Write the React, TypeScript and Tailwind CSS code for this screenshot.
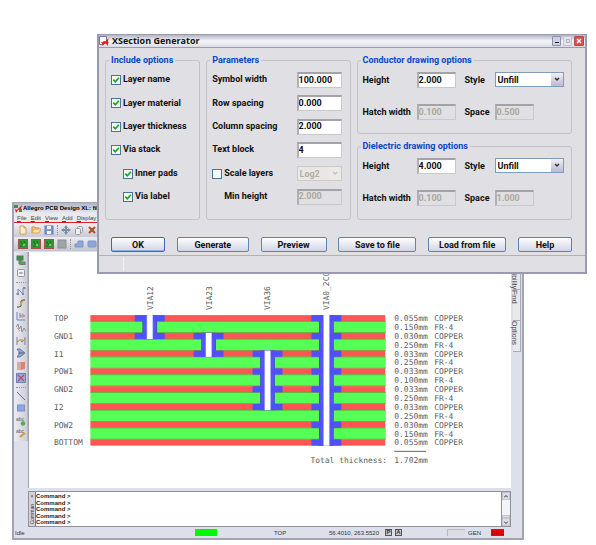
import React from 'react';

interface Layer {
  name?: string;
  thickness: string;
  material: 'COPPER' | 'FR-4';
}

interface Via {
  label: string;
  x: number;
  from: number;
  to: number;
}

const layers: Layer[] = [
  { name: 'TOP', thickness: '0.055mm', material: 'COPPER' },
  { thickness: '0.150mm', material: 'FR-4' },
  { name: 'GND1', thickness: '0.030mm', material: 'COPPER' },
  { thickness: '0.250mm', material: 'FR-4' },
  { name: 'I1', thickness: '0.033mm', material: 'COPPER' },
  { thickness: '0.250mm', material: 'FR-4' },
  { name: 'POW1', thickness: '0.033mm', material: 'COPPER' },
  { thickness: '0.100mm', material: 'FR-4' },
  { name: 'GND2', thickness: '0.033mm', material: 'COPPER' },
  { thickness: '0.250mm', material: 'FR-4' },
  { name: 'I2', thickness: '0.033mm', material: 'COPPER' },
  { thickness: '0.250mm', material: 'FR-4' },
  { name: 'POW2', thickness: '0.030mm', material: 'COPPER' },
  { thickness: '0.150mm', material: 'FR-4' },
  { name: 'BOTTOM', thickness: '0.055mm', material: 'COPPER' },
];

// from / to are copper numbers, counted from the top
const vias: Via[] = [
  { label: 'VIA12', x: 121, from: 0, to: 1 },
  { label: 'VIA23', x: 180, from: 1, to: 2 },
  { label: 'VIA36', x: 239, from: 2, to: 5 },
  { label: 'VIA0_2CO', x: 298, from: 0, to: 7 },
];

const TOP_Y = 63;
const PITCH = 17.8;
const copperY = (n: number) => TOP_Y + n * PITCH;

const CrossSection: React.FC = () => (
  <svg
    width="483"
    height="236"
    viewBox="0 0 483 236"
    className="block max-w-full"
    fontFamily="'DejaVu Sans Mono', monospace"
    fontSize="8"
    fill="#5c5c5c"
    role="img"
    aria-label="Layer cross section"
  >
    {layers.map((layer, i) =>
      layer.material === 'COPPER' ? (
        <rect key={i} x="61.5" y={copperY(i / 2)} width="295.5" height="6.2" fill="#ff5555" />
      ) : (
        <g key={i}>
          <rect x="61.5" y={copperY((i - 1) / 2) + 6} width="296" height="12" fill="#55ff55" />
          <path
            d={`M61.5 ${copperY((i - 1) / 2) + 6.3}h296M61.5 ${copperY((i - 1) / 2) + 17.6}h296`}
            stroke="#5a8a20"
            strokeWidth="0.6"
          />
        </g>
      ),
    )}

    {vias.map((via) => {
      const top = copperY(via.from);
      const bottom = copperY(via.to) + 6.2;
      const coppers = Array.from({ length: via.to - via.from + 1 }, (_, n) => via.from + n);
      return (
        <g key={via.label}>
          <rect x={via.x - 7.4} y={top} width="14.8" height={bottom - top} fill="#3c55b8" />
          <rect x={via.x - 6.6} y={top} width="13.2" height={bottom - top} fill="#5555ff" />
          {coppers.map((n) => (
            <rect key={n} x={via.x - 15} y={copperY(n)} width="30" height="6.2" fill="#5050fa" />
          ))}
          <rect x={via.x - 3.4} y={top} width="6.8" height={bottom - top} fill="#8f8ff8" />
          <rect x={via.x - 2.6} y={top} width="5.4" height={bottom - top} fill="#ffffff" />
          <text transform={`translate(${via.x + 3} 58) rotate(-90)`}>{via.label}</text>
        </g>
      );
    })}

    {layers.map((layer, i) => {
      const y = TOP_Y + 6 + (i * PITCH) / 2;
      return (
        <g key={i}>
          {layer.name && <text x="25" y={y}>{layer.name}</text>}
          <text x="366" y={y}>{layer.thickness}</text>
          <text x="406" y={y}>{layer.material}</text>
        </g>
      );
    })}

    <path d="M366 199.5h32" stroke="#666" strokeWidth="1" />
    <text x="282" y="211">Total thickness:</text>
    <text x="366" y="211">1.702mm</text>
  </svg>
);

const Icon: React.FC<{ children: React.ReactNode }> = ({ children }) => (
  <svg width="10" height="10" viewBox="0 0 10 10" fill="none" className="block shrink-0">
    {children}
  </svg>
);

const ToolButton: React.FC<{ label: string; children: React.ReactNode }> = ({ label, children }) => (
  <button type="button" aria-label={label} className="block shrink-0">
    <Icon>{children}</Icon>
  </button>
);

const AppLogo = () => (
  <svg width="10" height="10" viewBox="0 0 10 10" className="block shrink-0">
    <path d="M.5 .5h7v5l-3 3h-4z" fill="#fff" stroke="#6d7ba0" strokeWidth="1" />
    <path d="M1 5l2 1.500L5 5l1.500 .5L9.500 2l-.5 3.500 .5 1L8.500 10 7 7.500 5 8l-1.500 2-.5-2.500z" fill="#e01c1c" />
  </svg>
);

const EditorLogo = () => (
  <svg width="9" height="9" viewBox="0 0 9 9" className="block shrink-0">
    <path d="M0 1h4v3H0zM5 5h3v3H5z" fill="#2e9a3c" />
    <path d="M1 5l2 1 2-2 3-3-1 4-3 1-2 3z" fill="#e01c1c" />
  </svg>
);

const Grip = () => <span className="h-[10px] border-l border-dotted border-[#8e909c]" />;

const BoardIcon: React.FC<{ label: string }> = ({ label }) => (
  <ToolButton label={label}>
    <rect x=".5" y=".5" width="9" height="9" fill="#2f9a35" stroke="#a65046" />
    <path d="M3 2v2l4 3M6 2l1 2M2 7h2" stroke="#126a1e" />
    <circle cx="6" cy="6" r="1" fill="#8cdc8c" />
  </ToolButton>
);

const Toolbars = () => (
  <div className="bg-[#dedfe6]">
    <div className="flex h-[14px] items-center gap-[3px] bg-linear-to-b from-[#f1f1f5] to-[#c9cad3] px-[4px]">
      <ToolButton label="New">
        <path d="M2 1h4l2 2v6H2z" fill="#fff1cf" stroke="#d79a4c" />
        <path d="M6 1v2h2" stroke="#d79a4c" />
      </ToolButton>
      <ToolButton label="Open">
        <path d="M1 8V2h3l1 1h3v2" fill="#f8d48a" stroke="#c98d3d" />
        <path d="M1 8l2-4h7L8 8z" fill="#ffe3a6" stroke="#d9a45c" />
      </ToolButton>
      <ToolButton label="Save">
        <rect x="1" y="1" width="8" height="8" fill="#7f98d4" stroke="#6478b0" />
        <path d="M3 1h4v3H3zM3 6h4v3H3z" fill="#eef3ff" />
      </ToolButton>
      <Grip />
      <ToolButton label="Move">
        <path d="M5 1v8M1 5h8" stroke="#7e8da6" strokeWidth="2" />
        <path d="M3 3l2-3 2 3zM3 7l2 3 2-3zM3 3L0 5l3 2zM7 3l3 2-3 2z" fill="#7e8da6" />
      </ToolButton>
      <ToolButton label="Copy">
        <rect x="3.5" y="1.5" width="5" height="6" rx="1" fill="#eee" stroke="#999" />
        <rect x="1.5" y="3.5" width="5" height="6" rx="1" fill="#eee" stroke="#999" />
      </ToolButton>
      <ToolButton label="Delete">
        <path d="M2 2l6 6M8 2L2 8" stroke="#b5491f" strokeWidth="2" />
      </ToolButton>
    </div>
    <div className="flex h-[14px] items-center gap-[3px] bg-linear-to-b from-[#ececf1] to-[#c4c5ce] px-[4px]">
      <BoardIcon label="Place" />
      <BoardIcon label="Route" />
      <BoardIcon label="Etch" />
      <ToolButton label="Off">
        <rect x="1" y="1" width="8" height="8" fill="#a2a3a8" stroke="#8e8f94" />
      </ToolButton>
      <Grip />
      <ToolButton label="Shape">
        <path d="M4 2h5v6H1V5h3z" fill="#8ea6dc" stroke="#7f94c8" />
      </ToolButton>
      <ToolButton label="Rectangle">
        <rect x="1" y="2" width="8" height="6" rx="1" fill="#8ea6dc" stroke="#7f94c8" />
      </ToolButton>
    </div>
  </div>
);

const SideTools = () => (
  <div className="w-[14px] shrink-0">
    <div className="flex h-[189px] flex-col items-center justify-between border-r border-[#b5b6c0] bg-linear-to-r from-[#ededf2] to-[#cdced7] py-[3px]">
      <div className="flex flex-col gap-[3px]">
        <ToolButton label="Place manual">
          <rect x="1" y="1" width="6" height="4" fill="#2f9a45" stroke="#56705a" />
          <path d="M3 9V5h2v2h4v3z" fill="#46b545" stroke="#66756a" />
        </ToolButton>
        <ToolButton label="Text box">
          <rect x="1.5" y="1.5" width="7" height="7" rx="1" fill="#f3f3f6" stroke="#92949d" />
          <path d="M3 5h4" stroke="#777" />
        </ToolButton>
      </div>
      <span className="w-[10px] border-t border-dotted border-[#8e909c]" />
      <div className="flex h-[97px] flex-col justify-between">
        <ToolButton label="Add connect">
          <path d="M0 8h2V3l5 5V2h3" stroke="#7c8bb4" />
          <path d="M1 7h2v2H1zM6 7h2v2H6zM7 1h2v2H7z" fill="#7c8bb4" />
        </ToolButton>
        <ToolButton label="Slide">
          <path d="M1 9h2l2-1V3l2-1h2" stroke="#44454c" />
          <path d="M4 7l3-4" stroke="#d7b03d" strokeWidth="1.500" />
        </ToolButton>
        <ToolButton label="Delay tune">
          <path d="M1 1v8h8M4 2v5M4 5h5" stroke="#6f85b8" />
          <path d="M6 2l3 3-3 2z" fill="#d98a8a" />
        </ToolButton>
        <ToolButton label="Custom smooth">
          <path d="M0 4l2-3 1 5 2-3 1 6 2-4 2 3" stroke="#8c8c94" />
          <path d="M1 5l3 3" stroke="#c99" />
        </ToolButton>
        <ToolButton label="Vertex">
          <path d="M1 1v8M9 1v8M1 6l3-2 2 2 3-3" stroke="#85858d" />
          <path d="M3 3h4v2H3z" fill="#d9b35a" />
        </ToolButton>
        <ToolButton label="Spread">
          <path d="M1 1h3l5 4-5 4H1l3-4z" fill="#8fa6d6" stroke="#647bb0" />
          <path d="M2 5h6" stroke="#5a6480" />
        </ToolButton>
        <ToolButton label="Glossing">
          <path d="M1 2h8M1 4h8M1 6h8M1 8h6" stroke="#cd7360" />
          <path d="M5 1h4v7H5z" fill="#d98370" />
        </ToolButton>
        <ToolButton label="Ratsnest">
          <rect x=".5" y=".5" width="9" height="9" fill="#9aacdb" stroke="#6d80b5" />
          <path d="M2 2l6 6M8 2L2 8" stroke="#c0465a" strokeWidth="1.300" />
        </ToolButton>
      </div>
      <span className="w-[10px] border-t border-dotted border-[#8e909c]" />
      <div className="flex h-[47px] flex-col justify-between">
        <ToolButton label="Add line">
          <path d="M1 1l8 8" stroke="#5f6f94" />
        </ToolButton>
        <ToolButton label="Add rectangle">
          <rect x="1.500" y="2" width="7" height="6" fill="#8fa6dc" stroke="#7b92c8" />
        </ToolButton>
        <ToolButton label="Add text">
          <text x="0" y="5" fontSize="5" fontFamily="'Liberation Sans', sans-serif" fill="#555">abc</text>
          <circle cx="7" cy="7.500" r="2.200" fill="#4db04a" />
        </ToolButton>
        <ToolButton label="Edit text">
          <text x="0" y="5" fontSize="5" fontFamily="'Liberation Sans', sans-serif" fill="#555">abc</text>
          <path d="M4 9l5-4" stroke="#dc9a28" strokeWidth="2" />
        </ToolButton>
      </div>
    </div>
  </div>
);

const DockTabs = () => (
  <div className="w-[11px] shrink-0 pl-[2px] text-[7px] leading-[8px] text-[#44454c]">
    {['Visibility', 'Find', 'Options'].map((tab) => (
      <button
        key={tab}
        type="button"
        className="block h-[31px] w-[8px] border-r border-b border-[#a9aab4] bg-[#e9e9ed] py-[2px] text-left [writing-mode:vertical-rl] first:h-[38px] first:text-right"
      >
        {tab}
      </button>
    ))}
  </div>
);

const ScrollArrow: React.FC<{ up?: boolean }> = ({ up }) => (
  <button
    type="button"
    aria-label={up ? 'Scroll up' : 'Scroll down'}
    className="flex h-[8px] w-full items-center justify-center border border-[#c3c4d0] bg-[#dcdde8]"
  >
    <svg width="4" height="3" viewBox="0 0 4 3" fill="none">
      <path d={up ? 'M0 2.500l2-2 2 2' : 'M0 .5l2 2 2-2'} stroke="#333" />
    </svg>
  </button>
);

const CommandPane = () => (
  <div className="mr-[11px] ml-[14px] flex h-[36px] border border-[#8f909a] bg-[#dedfe6]">
    <div className="flex w-[6px] flex-col items-center justify-between overflow-hidden bg-[#d3d3da] py-[2px] text-[5px] leading-[5px] text-[#333]">
      <span>×</span>
      <span className="[writing-mode:vertical-rl] rotate-180">Comman</span>
    </div>
    <div className="flex flex-1 flex-col justify-between border-l border-[#77787f] bg-white py-px text-[6px] leading-[6px] font-bold text-[#222]">
      {[1, 2, 3, 4, 5].map((n) => (
        <p key={n}>Command &gt;</p>
      ))}
    </div>
    <div className="flex w-[9px] flex-col border-l border-[#8f909a] bg-[#f4f4f8]">
      <ScrollArrow up />
      <span className="mt-auto h-[3px] border border-[#c3c4d0] bg-[#dcdde8]" />
      <ScrollArrow />
    </div>
  </div>
);

const StatusBar = () => (
  <div className="flex h-[11px] items-center pl-px text-[6px] leading-[8px] text-[#333]">
    <span className="w-[180px]">Idle</span>
    <span className="h-[7px] w-[22px] bg-[#00f800]" />
    <span className="ml-[57px] w-[55px]">TOP</span>
    <span className="w-[56px]">56.4010, 263.5520</span>
    <span className="flex gap-[3px] font-bold">
      <button type="button" className="h-[7px] w-[7px] border border-[#555] bg-[#c9c9cf] text-center leading-[5px]">P</button>
      <button type="button" className="h-[7px] w-[7px] border border-[#555] bg-[#c9c9cf] text-center leading-[5px]">A</button>
    </span>
    <span className="ml-auto h-[7px] w-[18px] border-t border-l border-[#b9b9c0] bg-[#dcdce0]" />
    <span className="ml-[3px] w-[23px]">GEN</span>
    <span className="mr-[18px] h-[7px] w-[13px] bg-[#ff0000] text-center text-[#8a0000]">DRC</span>
  </div>
);

const EditorWindow = () => (
  <section className="mt-[202px] mr-[72px] ml-[12px] border-2 border-t border-[#a2a3b6] bg-[#dde0ea] font-['Liberation_Sans',sans-serif]">
    <header className="flex h-[10px] items-center overflow-hidden bg-linear-to-b from-[#b4b5c6] to-[#e8e8f0] text-[6px] font-bold whitespace-nowrap">
      <EditorLogo />
      <h1>Allegro PCB Design XL: file.brd</h1>
    </header>
    <nav className="flex h-[10px] items-center gap-[4px] border-b border-[#e02020] bg-[#e9e9ee] pl-[3px] text-[6px] text-[#44454c]">
      {['File', 'Edit', 'View', 'Add', 'Display'].map((item) => (
        <button key={item} type="button" className="leading-[8px] first-letter:underline">
          {item}
        </button>
      ))}
    </nav>
    <Toolbars />
    <div className="mt-px flex">
      <SideTools />
      <div className="min-w-0 flex-1 overflow-hidden border-l border-[#a3a4ad] bg-white">
        <CrossSection />
      </div>
      <DockTabs />
    </div>
    <div className="h-[3px]" />
    <CommandPane />
    <StatusBar />
  </section>
);

interface FieldProps {
  label: string;
  value: string;
  disabled?: boolean;
}

const inputClass =
  'h-[16px] border-t-2 border-l-2 border-r border-b border-t-[#a3a3a6] border-l-[#b0b0b3] border-r-[#c9c8cd] border-b-[#c9c8cd] bg-white pb-[2px] font-bold leading-[11px] disabled:bg-[#e0dfe3] disabled:text-[#aaa89c]';

const Check: React.FC<{ label: string; checked?: boolean; className?: string }> = ({ label, checked, className = '' }) => (
  <label className={`flex h-[16px] items-center gap-[2px] ${className}`}>
    <span className="grid">
      <input
        type="checkbox"
        defaultChecked={checked}
        className="peer col-start-1 row-start-1 h-[10px] w-[10px] appearance-none border border-[#4a7398] bg-[#f6f6f4]"
      />
      <svg
        width="10"
        height="10"
        viewBox="0 0 10 10"
        fill="none"
        className="pointer-events-none invisible col-start-1 row-start-1 peer-checked:visible"
      >
        <path d="M2.300 4.600l2 2.200 3.600-4" stroke="#21a121" strokeWidth="1.700" />
      </svg>
    </span>
    {label}
  </label>
);

const ParamField: React.FC<FieldProps & { indent?: boolean }> = ({ label, value, disabled, indent }) => (
  <label className="flex h-[16px] items-center justify-between">
    <span className={indent ? 'pl-[12px]' : ''}>{label}</span>
    <input defaultValue={value} disabled={disabled} className={`w-[45px] ${inputClass}`} />
  </label>
);

const DropDown: React.FC<{ label: string; options: string[]; disabled?: boolean; className: string }> = ({
  label,
  options,
  disabled,
  className,
}) => (
  <span className={`grid ${className}`}>
    <select
      aria-label={label}
      disabled={disabled}
      className="col-start-1 row-start-1 h-[15px] w-full appearance-none border border-[#7f9db9] bg-white px-[2px] leading-[12px] font-bold disabled:border-[#cbc9c4] disabled:bg-[#e8e7e5] disabled:text-[#b0aea2]"
    >
      {options.map((o) => (
        <option key={o}>{o}</option>
      ))}
    </select>
    <span
      className={`pointer-events-none col-start-1 row-start-1 m-px flex h-[13px] w-[12px] items-center justify-center justify-self-end ${
        disabled ? 'bg-[#ebeae8] text-[#c4c2ba]' : 'bg-linear-to-b from-[#f0f0f6] to-[#b9bbcf] text-[#333]'
      }`}
    >
      <svg width="6" height="5" viewBox="0 0 6 5" fill="none">
        <path d="M1 1l2 2 2-2" stroke="currentColor" strokeWidth="1.500" />
      </svg>
    </span>
  </span>
);

const Group: React.FC<{ title: string; className?: string; children: React.ReactNode }> = ({ title, className = '', children }) => (
  <fieldset className={`min-w-0 rounded-[3px] border border-[#c3c2c9] ${className}`}>
    <legend className="ml-[3px] px-[2px] leading-[12px] text-[#0a46c8]">{title}</legend>
    {children}
  </fieldset>
);

const DrawingOptions: React.FC<{ title: string; height: string; hatch: string; space: string }> = ({ title, height, hatch, space }) => (
  <Group title={title}>
    <div className="grid grid-cols-[54px_39px_30px_1fr] gap-y-[16px] pt-[6px] pr-[7px] pb-[13px] pl-[5px]">
      <label htmlFor={`${title}-height`} className="leading-[16px]">Height</label>
      <input id={`${title}-height`} defaultValue={height} className={inputClass} />
      <span className="pl-[9px] leading-[16px]">Style</span>
      <DropDown label={`${title} style`} options={['Unfill', 'Fill', 'Hatch']} className="ml-[9px]" />
      <label htmlFor={`${title}-hatch`} className="leading-[16px]">Hatch width</label>
      <input id={`${title}-hatch`} defaultValue={hatch} disabled className={inputClass} />
      <label htmlFor={`${title}-space`} className="pl-[9px] leading-[16px]">Space</label>
      <input id={`${title}-space`} defaultValue={space} disabled className={`ml-[9px] w-[39px] ${inputClass}`} />
    </div>
  </Group>
);

const PushButton: React.FC<{ className: string; children: React.ReactNode }> = ({ className, children }) => (
  <button
    type="button"
    className={`h-[15px] rounded-[2px] border bg-linear-to-b from-white to-[#d3d4e3] leading-[12px] ${className}`}
  >
    {children}
  </button>
);

const GeneratorDialog = () => (
  <section
    role="dialog"
    aria-label="XSection Generator"
    className="absolute top-[34px] right-[9px] left-[97px] border-2 border-t border-[#9a9bb0] bg-[#e0dfe3] font-[Roboto,sans-serif] text-[9px] font-bold text-[#111]"
  >
    <header className="flex h-[13px] items-center gap-[3px] border-b border-[#9c9caa] bg-linear-to-b from-[#b4b5c5] via-[#f4f4f8] to-[#dcdce6] pr-px">
      <AppLogo />
      <h2 className="font-['Open_Sans',sans-serif] text-[9px] leading-[12px]">XSection Generator</h2>
      <div className="ml-auto flex gap-[2px]">
        <button type="button" aria-label="Minimize" className="flex h-[10px] w-[9px] items-end justify-center rounded-[1px] border border-[#8d90ac] bg-[#cfd1e2] pb-[2px]">
          <span className="h-px w-[4px] bg-[#222]" />
        </button>
        <button type="button" aria-label="Maximize" className="flex h-[10px] w-[9px] items-center justify-center rounded-[1px] border border-[#c0c1d0] bg-[#e6e6ee]">
          <span className="h-[4px] w-[4px] border border-[#b0b1bd]" />
        </button>
        <button type="button" aria-label="Close" className="flex h-[10px] w-[10px] items-center justify-center rounded-[1px] border border-[#b34a48] bg-[#d65350]">
          <svg width="6" height="6" viewBox="0 0 6 6">
            <path d="M1 1l4 4M5 1L1 5" stroke="#fff" strokeWidth="1.300" />
          </svg>
        </button>
      </div>
    </header>

    <form className="pt-[6px] pr-[13px] pb-[3px] pl-[6px]">
      <div className="grid grid-cols-[95fr_144fr_215fr] gap-x-[6px]">
        <Group title="Include options">
          <div className="flex h-full flex-col justify-between pt-[6px] pb-[14px] pl-[5px]">
            <Check label="Layer name" checked />
            <Check label="Layer material" checked />
            <Check label="Layer thickness" checked />
            <Check label="Via stack" checked />
            <Check label="Inner pads" checked className="pl-[12px]" />
            <Check label="Via label" checked className="pl-[12px]" />
          </div>
        </Group>
        <Group title="Parameters">
          <div className="flex h-full flex-col justify-between pt-[6px] pr-[8px] pb-[14px] pl-[5px]">
            <ParamField label="Symbol width" value="100.000" />
            <ParamField label="Row spacing" value="0.000" />
            <ParamField label="Column spacing" value="2.000" />
            <ParamField label="Text block" value="4" />
            <div className="flex h-[16px] items-center justify-between">
              <Check label="Scale layers" />
              <DropDown label="Scale" options={['Log2']} disabled className="w-[45px]" />
            </div>
            <ParamField label="Min height" value="2.000" disabled indent />
          </div>
        </Group>
        <div className="flex flex-col gap-[6px]">
          <DrawingOptions title="Conductor drawing options" height="2.000" hatch="0.100" space="0.500" />
          <DrawingOptions title="Dielectric drawing options" height="4.000" hatch="0.100" space="1.000" />
        </div>
      </div>
      <div className="mt-[17px] flex justify-between pl-[6px]">
        <PushButton className="w-[54px] border-[#3b68b8] shadow-[inset_0_-1px_0_#8fb0ea]">OK</PushButton>
        <PushButton className="w-[72px] border-[#5f84ad]">Generate</PushButton>
        <PushButton className="w-[66px] border-[#5f84ad]">Preview</PushButton>
        <PushButton className="w-[78px] border-[#5f84ad]">Save to file</PushButton>
        <PushButton className="w-[78px] border-[#5f84ad]">Load from file</PushButton>
        <PushButton className="w-[54px] border-[#5f84ad]">Help</PushButton>
      </div>
    </form>
    <footer className="h-[17px] border-t border-[#b0b0b6] py-px">
      <div className="h-full w-[25px] border-r border-[#f2f2ee]" />
    </footer>
  </section>
);

export default function App() {
  return (
    <main className="relative flow-root min-h-screen bg-white">
      <EditorWindow />
      <GeneratorDialog />
    </main>
  );
}
